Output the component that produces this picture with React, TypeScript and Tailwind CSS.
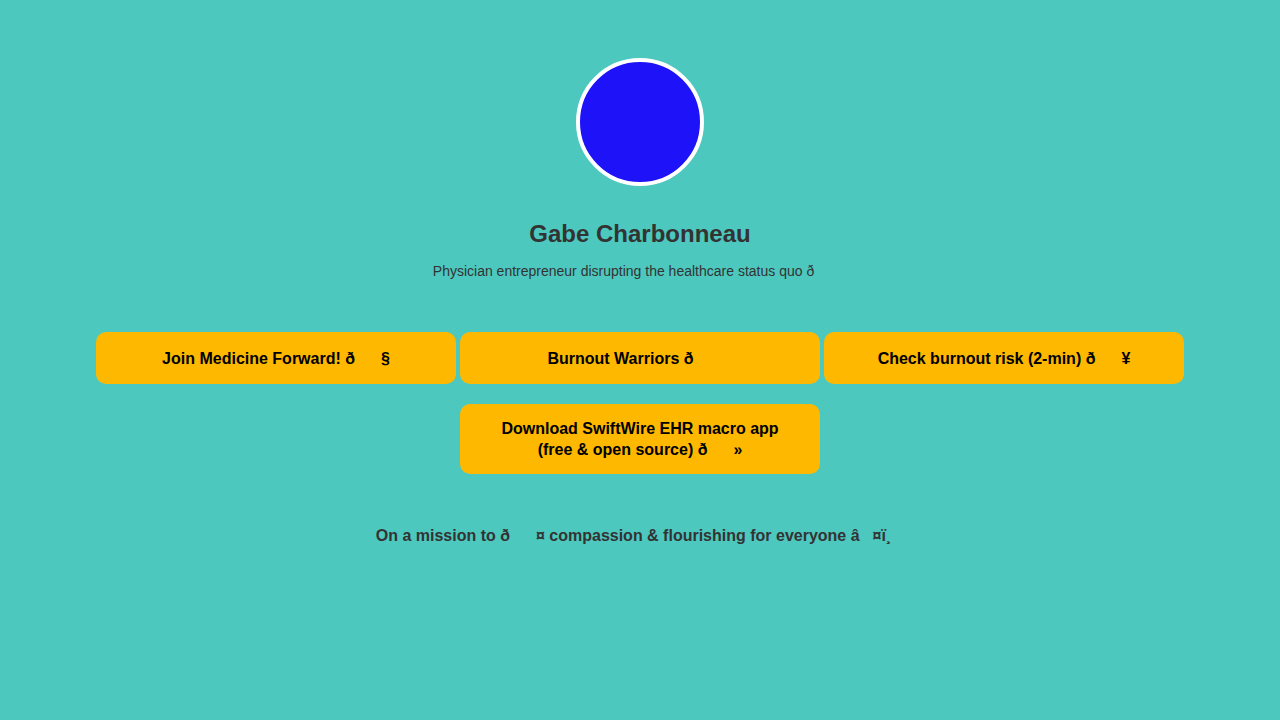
const links = [
  'Join Medicine Forward! \u00f0\u009f\u0091\u00a7',
  'Burnout Warriors \u00f0\u009f\u0099\u008c',
  'Check burnout risk (2-min) \u00f0\u009f\u0094\u00a5',
  'Download SwiftWire EHR macro app (free & open source) \u00f0\u009f\u0092\u00bb',
];

export default function App() {
  return (
    <div
      className="min-h-screen w-full bg-[#4cc8bf] flex flex-col items-center pt-[58px]"
      style={{ fontFamily: '"Liberation Sans", Arial, sans-serif' }}
    >
      <div className="w-32 h-32 rounded-full border-4 border-white bg-[#1e12f8]" />

      <h1 className="mt-[32px] text-2xl font-bold text-[#333333]">Gabe Charbonneau</h1>
      <p className="mt-[11px] text-sm text-[#333333]">
        Physician entrepreneur disrupting the healthcare status quo {'\u00f0\u009f\u0098\u0080'}
      </p>

      <div className="mt-[51px] w-[1088px] flex flex-wrap justify-center gap-x-1 gap-y-5">
        {links.map((l) => (
          <a
            key={l}
            href="#"
            className="w-[360px] min-h-[52px] flex items-center justify-center rounded-[10px] bg-[#ffb800] px-10 py-[14px] text-center text-base leading-[21px] font-bold text-black"
          >
            {l}
          </a>
        ))}
      </div>

      <p className="mt-[50px] text-base font-bold text-[#333333]">
        On a mission to {'\u00f0\u009f\u0092\u00a4'} compassion & flourishing for everyone {'\u00e2\u009d\u00a4\u00ef\u00b8\u008f'}
      </p>
    </div>
  );
}
